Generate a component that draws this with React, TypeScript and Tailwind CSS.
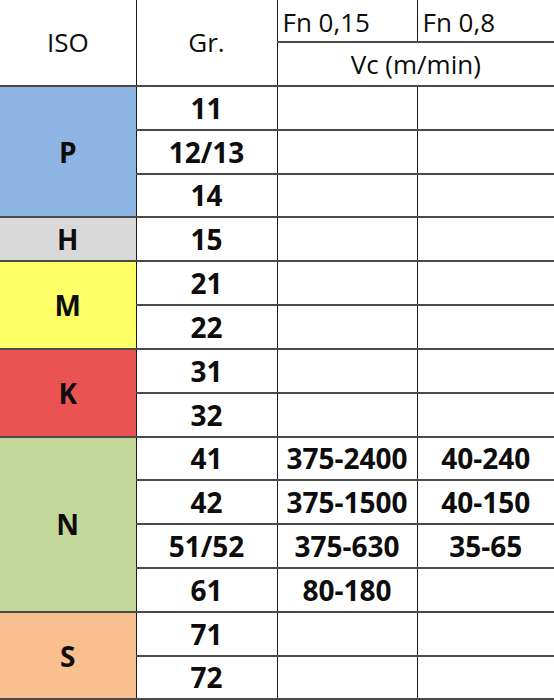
const groups = [
  { iso: 'P', bg: 'bg-[#8db4e2]', rows: [['11', '', ''], ['12/13', '', ''], ['14', '', '']] },
  { iso: 'H', bg: 'bg-[#d9d9d9]', rows: [['15', '', '']] },
  { iso: 'M', bg: 'bg-[#ffff66]', rows: [['21', '', ''], ['22', '', '']] },
  { iso: 'K', bg: 'bg-[#eb5252]', rows: [['31', '', ''], ['32', '', '']] },
  {
    iso: 'N',
    bg: 'bg-[#c4d79b]',
    rows: [
      ['41', '375-2400', '40-240'],
      ['42', '375-1500', '40-150'],
      ['51/52', '375-630', '35-65'],
      ['61', '80-180', ''],
    ],
  },
  { iso: 'S', bg: 'bg-[#fabf8f]', rows: [['71', '', ''], ['72', '', '']] },
];

const cell = 'border-b-2 border-b-[#4a4a4a] border-r border-r-[#1a1a1a] p-0';

export default function App() {
  return (
    <div className="w-[554px] h-[700px] overflow-hidden bg-white font-['Open_Sans',sans-serif] text-[#0d0d0d]">
      <table className="table-fixed border-collapse w-[554px]">
        <colgroup>
          <col className="w-[136px]" />
          <col className="w-[141px]" />
          <col className="w-[140px]" />
          <col className="w-[137px]" />
        </colgroup>
        <thead>
          <tr className="h-[42px]">
            <th rowSpan={2} className={`${cell} font-normal text-[26px] text-center`}>
              ISO
            </th>
            <th rowSpan={2} className={`${cell} font-normal text-[26px] text-center`}>
              Gr.
            </th>
            <th className={`${cell} font-normal text-[26px] text-left pl-[5px] pt-[2px] leading-none`}>Fn 0,15</th>
            <th className={`${cell} border-r-0 font-normal text-[26px] text-left pl-[5px] pt-[2px] leading-none`}>
              Fn 0,8
            </th>
          </tr>
          <tr className="h-[44px]">
            <th colSpan={2} className={`${cell} border-r-0 font-normal text-[26px] text-center leading-none`}>
              Vc (m/min)
            </th>
          </tr>
        </thead>
        <tbody>
          {groups.map((g) =>
            g.rows.map((r, i) => (
              <tr key={g.iso + r[0]} className="h-[43.8px]">
                {i === 0 && (
                  <td rowSpan={g.rows.length} className={`${cell} ${g.bg} text-center font-bold text-[28px]`}>
                    {g.iso}
                  </td>
                )}
                <td className={`${cell} text-center font-bold text-[28px] leading-none`}>{r[0]}</td>
                <td className={`${cell} text-center font-bold text-[28px] leading-none`}>{r[1]}</td>
                <td className={`${cell} border-r-0 text-center font-bold text-[28px] leading-none`}>{r[2]}</td>
              </tr>
            ))
          )}
        </tbody>
      </table>
    </div>
  );
}
